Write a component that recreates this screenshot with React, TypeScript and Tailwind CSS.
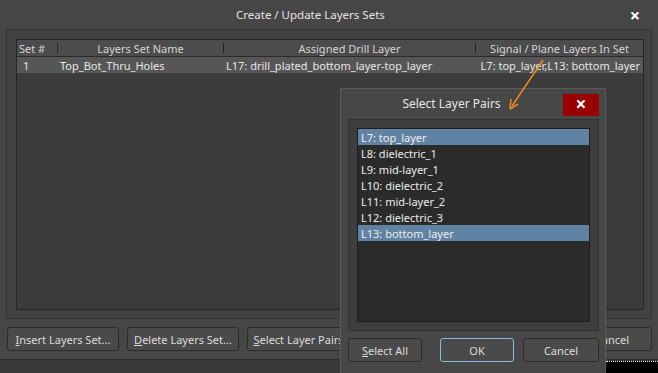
import { ReactNode } from 'react';

function Btn({ children, className = '' }: { children: ReactNode; className?: string }) {
  return (
    <div
      className={`h-[24px] flex items-center justify-center rounded-[3px] border border-[#2c2c2c] bg-[#4a4a4a] text-[#dcdcdc] whitespace-nowrap ${className}`}
    >
      {children}
    </div>
  );
}

const layers = [
  { name: 'L7: top_layer', on: true },
  { name: 'L8: dielectric_1', on: false },
  { name: 'L9: mid-layer_1', on: false },
  { name: 'L10: dielectric_2', on: false },
  { name: 'L11: mid-layer_2', on: false },
  { name: 'L12: dielectric_3', on: false },
  { name: 'L13: bottom_layer', on: true },
];

function SelectLayerPairs() {
  return (
    <div className="absolute left-[340px] top-[88px] w-[266px] h-[286px] bg-[#474747] border border-[#5a5a5a] flex flex-col pl-[7px] pr-[6px]">
      <div className="h-[30px] flex items-center">
        <div className="flex-1 text-center text-[#e6e6e6] text-[12px] pr-[8px]">Select Layer Pairs</div>
        <div className="w-[36px] h-[22px] bg-[#990000] flex items-center justify-center text-white text-[19px] font-bold mt-[1px]">
          ×
        </div>
      </div>
      <div className="h-[212px] border border-[#333] bg-[#3e3e3e] p-[8px]">
        <div className="h-full border border-[#1e1e1e] bg-[#2b2b2b]">
          {layers.map((l) => (
            <div
              key={l.name}
              className={`h-[16px] flex items-center pl-[3px] text-[#ececec] ${l.on ? 'bg-[#6083a3]' : ''}`}
            >
              {l.name}
            </div>
          ))}
        </div>
      </div>
      <div className="flex mt-[7px] gap-[18px]">
        <Btn className="w-[75px]">
          <span className="underline">S</span>elect All
        </Btn>
        <div className="flex gap-[9px]">
          <Btn className="w-[74px] !border-[#8fb6dc]">OK</Btn>
          <Btn className="w-[76px]">Cancel</Btn>
        </div>
      </div>
    </div>
  );
}

export default function App() {
  return (
    <div className="relative w-[658px] h-[373px] overflow-hidden bg-[#3a3a3a] font-['Noto_Sans',sans-serif] text-[11px] leading-none">
      <div className="h-[360px] bg-[#464646] border-b border-[#2e2e2e] flex flex-col">
        <div className="h-[29px] flex items-center">
          <div className="pl-[236px] flex-1 text-[#e4e4e4] text-[11.5px]">Create / Update Layers Sets</div>
          <div className="pr-[18px] text-white text-[18px] font-bold">×</div>
        </div>
        <div className="mx-[6px] h-[290px] border border-[#333] bg-[#424242] pt-[9px] pb-[8px] pl-[9px] pr-[7px] flex">
          <div className="flex-1 border border-[#262626] bg-[#3c3c3c] flex flex-col">
            <div className="h-[17px] bg-[#4c4c4c] border-b border-[#2a2a2a] flex items-center text-[#d4d4d4]">
              <div className="w-[40px] pl-[2px]">Set #</div>
              <div className="w-[1px] h-[10px] bg-[#222]" />
              <div className="w-[165px] text-center">Layers Set Name</div>
              <div className="w-[1px] h-[10px] bg-[#222]" />
              <div className="w-[251px] text-center">Assigned Drill Layer</div>
              <div className="w-[1px] h-[10px] bg-[#222]" />
              <div className="flex-1 text-center">Signal / Plane Layers In Set</div>
            </div>
            <div className="h-[16px] bg-[#565656] flex items-center text-[#e6e6e6] whitespace-nowrap">
              <div className="w-[41px] pl-[6px]">1</div>
              <div className="w-[166px] pl-[2px]">Top_Bot_Thru_Holes</div>
              <div className="w-[252px] pl-[2px]">L17: drill_plated_bottom_layer-top_layer</div>
              <div className="flex-1 text-right pr-[3px]">L7: top_layer,L13: bottom_layer</div>
            </div>
          </div>
        </div>
        <div className="flex mt-[8px] pl-[7px] pr-[6px] gap-[8px]">
          <Btn className="w-[112px]">
            <span className="underline">I</span>nsert Layers Set...
          </Btn>
          <Btn className="w-[112px]">
            <span className="underline">D</span>elete Layers Set...
          </Btn>
          <Btn className="w-[112px]">
            <span className="underline">S</span>elect Layer Pairs...
          </Btn>
          <Btn className="w-[80px] ml-auto">Cancel</Btn>
        </div>
      </div>
      <div className="absolute left-[606px] top-[361px] w-[52px] h-[12px] bg-[#000] border-t border-dotted border-[#fff]" />
      <SelectLayerPairs />
      <svg className="absolute left-0 top-0" width="658" height="373" viewBox="0 0 658 373">
        <line x1="543" y1="60" x2="512" y2="106" stroke="#f0891d" strokeWidth="1.5" />
        <path d="M510 109 L511 99 M510 109 L518 104" stroke="#f0891d" strokeWidth="1.5" fill="none" />
      </svg>
    </div>
  );
}
